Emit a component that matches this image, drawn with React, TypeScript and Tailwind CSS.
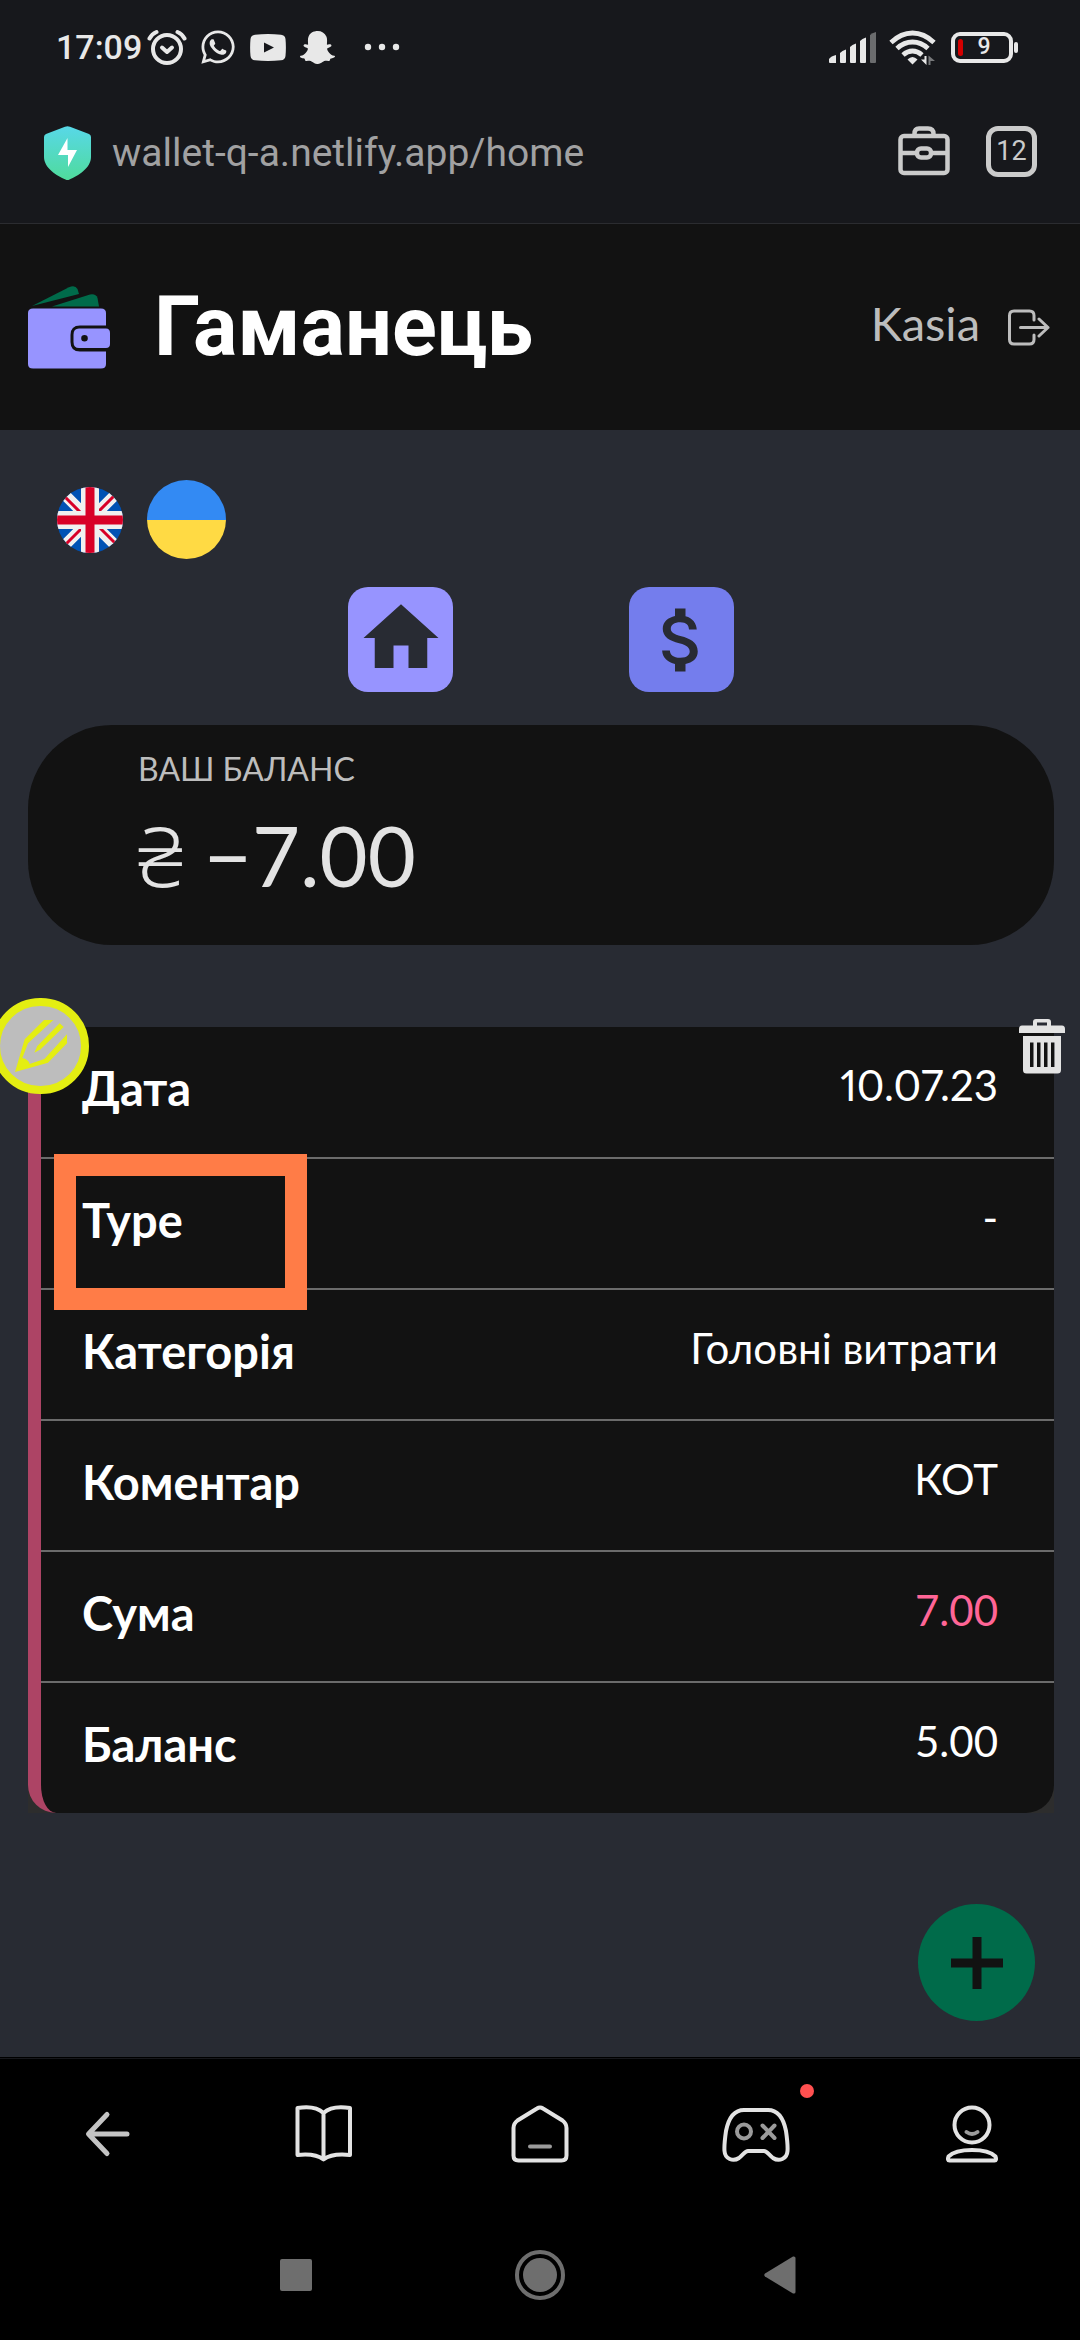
import React from "react";
import { FaWhatsapp, FaSnapchatGhost } from "react-icons/fa";
import { MdHome, MdAttachMoney } from "react-icons/md";

function StatusBar() {
  return (
    <div className="flex h-[94px] items-center justify-between pl-14 pr-[62px] text-[#e8e8e8]">
      <div className="flex items-center">
        <span className="w-[91px] text-[34px] leading-10 font-medium">17:09</span>
        <svg className="h-9 w-10" viewBox="0 0 40 36" fill="none" stroke="currentColor" strokeWidth="4" strokeLinecap="round">
          <circle cx="20" cy="20" r="14" />
          <path d="M2.500 9.500C4 6.500 6.500 4.300 9.500 3M37.500 9.500C36 6.500 33.500 4.300 30.500 3" />
          <path d="M15 18.500l5 4.500 5-4.500" strokeLinejoin="round" />
        </svg>
        <FaWhatsapp className="ml-3 h-[38px] w-[38px]" />
        <svg className="ml-[13px] h-[27px] w-9" viewBox="0 0 36 27">
          <path fill="currentColor" fillRule="evenodd" d="M5 .7Q18-.5 31 .7Q35 1 35.500 5Q36.300 13.500 35.500 22Q35 26 31 26.300Q18 27.500 5 26.300Q1 26 .5 22Q-.3 13.500 .5 5Q1 1 5 .7ZM14 8.500V18.500L24 13.500Z" />
        </svg>
        <FaSnapchatGhost className="ml-[14px] h-[35px] w-[35px]" />
        <svg className="ml-[29px] h-2 w-9" viewBox="0 0 36 8" fill="currentColor">
          <circle cx="4" cy="4" r="3.200" />
          <circle cx="18" cy="4" r="3.200" />
          <circle cx="32" cy="4" r="3.200" />
        </svg>
      </div>
      <div className="flex items-center">
        <svg className="h-[31px] w-12" viewBox="0 0 48 31" fill="currentColor">
          <path d="M0 27Q2 24 7 23V31H1Q0 31 0 30Z" />
          <path d="M11 21Q13 18.500 17 17.500V30Q17 31 16 31H12Q11 31 11 30Z" />
          <path d="M21 15Q23 12.500 27 11.500V30Q27 31 26 31H22Q21 31 21 30Z" />
          <path d="M31 9Q33 6.500 37 5.500V30Q37 31 36 31H32Q31 31 31 30Z" />
          <path fill="#6b6c6e" d="M41 3Q43 1 47 0V30Q47 31 46 31H42Q41 31 41 30Z" />
        </svg>
        <svg className="ml-3 h-[35px] w-12" viewBox="0 0 48 35" fill="none" stroke="currentColor" strokeWidth="4.800">
          <path d="M2 12.500Q12 3 23.500 3T45 12.500" />
          <path d="M8 18.500Q15 12 23.500 12T39 18.500" />
          <path d="M14 25Q18.500 21 23.500 21T33 25" />
          <path fill="currentColor" stroke="none" d="M18.500 29.500Q23.500 24.500 28.500 29.500L23.500 34.500Z" />
          <path fill="currentColor" stroke="none" d="M35.500 26h2v9L32 29.500h3.500z" />
          <path fill="#77787a" stroke="none" d="M39.500 35h2v-4H46L39.500 25.500z" />
        </svg>
        <div className="ml-[14px] flex h-[31px] w-[62px] items-center rounded-[9px] border-4 border-current pl-[3px]">
          <span className="h-[17px] w-[5px] rounded-sm bg-[#d40000]" />
          <span className="flex-1 pr-1 text-center text-[23px] leading-6 font-medium">9</span>
        </div>
        <span className="ml-px h-[11px] w-1 rounded-sm bg-current" />
      </div>
    </div>
  );
}

function AddressBar() {
  return (
    <div className="flex h-[129px] items-start pl-11 pr-[43px] pt-8 text-[#cbcbcb]">
      <svg className="h-[54px] w-[47px] shrink-0" viewBox="0 0 47 54">
        <defs>
          <linearGradient id="shield" x1="0" y1="0" x2="0" y2="1">
            <stop offset="0" stopColor="#58d8e8" />
            <stop offset="1" stopColor="#4fdb9c" />
          </linearGradient>
        </defs>
        <path fill="url(#shield)" d="M21 .8Q23.500-.4 26 .8L45 8Q47 9 47 11V31C47 42 34 50 25.500 53.500Q23.500 54.500 21.500 53.500C13 50 0 42 0 31V11Q0 9 2 8Z" />
        <path fill="#fff" d="M23.500 12V24H33L24 41V29H14Z" />
      </svg>
      <input
        aria-label="Address"
        className="ml-[21px] min-w-0 flex-1 bg-transparent text-[39px] leading-[54px] text-[#a1a1a2] outline-none"
        defaultValue="wallet-q-a.netlify.app/home"
      />
      <button type="button" aria-label="Toolbox" className="h-[51px] w-[52px] shrink-0">
        <svg viewBox="0 0 52 51" fill="none" stroke="currentColor" strokeWidth="4.500">
          <rect x="2.500" y="10" width="47" height="37" rx="3.500" />
          <path d="M16.500 10V8Q16.500 2.500 21 2.500H30Q35.500 2.500 35.500 8V10M2.500 27H18M34 27H49.500" />
          <rect x="19" y="22.500" width="14" height="9" rx="4" />
        </svg>
      </button>
      <button type="button" aria-label="Tabs" className="ml-9 flex h-[51px] w-[51px] shrink-0 items-center justify-center rounded-xl border-[5px] border-current text-[27px] leading-none">
        12
      </button>
    </div>
  );
}

function WalletLogo() {
  return (
    <svg className="h-[83px] w-[82px] shrink-0" viewBox="0 0 82 83">
      <path fill="#006b4a" d="M4 20L41 1.200Q47-1.500 49.500 3L51 8Z" />
      <path fill="#006b4a" d="M24 20.500L62 8.500Q68 7.500 69.500 12L71 20.500Z" />
      <path fill="#9794ff" d="M5 22.500H73Q78 22.500 78 27V39.500H52Q42.500 39.500 42.500 49V56Q42.500 65.500 52 65.500H78V78Q78 82.500 73 82.500H5Q0 82.500 0 78V27Q0 22.500 5 22.500Z" />
      <path fill="#9794ff" fillRule="evenodd" d="M51 42.500H78Q82 42.500 82 47V58Q82 62 78 62H51Q45.500 62 45.500 56V48.500Q45.500 42.500 51 42.500ZM56.500 49A3.300 3.300 0 1 0 56.500 55.600A3.300 3.300 0 1 0 56.500 49Z" />
    </svg>
  );
}

function SiteHeader() {
  return (
    <header className="flex h-[206px] items-center justify-between bg-[#121212] pl-7 pr-[30px]">
      <a href="#home" className="flex items-center gap-11">
        <WalletLogo />
        <h1 className="text-[83px] leading-[96px] font-bold text-white">Гаманець</h1>
      </a>
      <div className="flex items-center gap-7 text-[#bdbdbd]">
        <span className="pb-2 font-['Lato'] text-[47px] leading-[60px]">Kasia</span>
        <button type="button" aria-label="Вийти" className="h-[37px] w-[42px]">
          <svg viewBox="0 0 42 37" fill="none" stroke="currentColor" strokeWidth="3" strokeLinecap="round" strokeLinejoin="round">
            <path d="M26 11V6.500Q26 2 21.500 2H6Q1.500 2 1.500 6.500V30.500Q1.500 35 6 35H21.500Q26 35 26 30.500V26" />
            <path d="M12.500 18.500H40M31 10l9 8.500-9 8.500" />
          </svg>
        </button>
      </div>
    </header>
  );
}

function Languages() {
  return (
    <div className="flex items-center gap-6 pl-[29px]">
      <button type="button" aria-label="English">
        <svg className="h-[66px] w-[66px]" viewBox="0 0 66 66">
          <clipPath id="uk"><circle cx="33" cy="33" r="33" /></clipPath>
          <g clipPath="url(#uk)">
            <path fill="#0052b4" d="M0 0H66V66H0Z" />
            <path stroke="#f0f0f0" strokeWidth="11" d="M0 0L66 66M66 0L0 66" />
            <path stroke="#d80027" strokeWidth="3" d="M5 7L26 28M61 5L40 26M40 38L61 59M5 61L26 40" />
            <path stroke="#f0f0f0" strokeWidth="18" d="M33 0V66M0 33H66" />
            <path stroke="#d80027" strokeWidth="9" d="M33 0V66M0 33H66" />
          </g>
        </svg>
      </button>
      <button type="button" aria-label="Українська" className="flex h-[79px] w-[79px] flex-col overflow-hidden rounded-full">
        <span className="w-full flex-1 bg-[#338af3]" />
        <span className="w-full flex-1 bg-[#ffda44]" />
      </button>
    </div>
  );
}

const rows = [
  { label: "Дата", value: "10.07.23", style: "text-white proportional-nums" },
  { label: "Type", value: "-", style: "text-white" },
  { label: "Категорія", value: "Головні витрати", style: "text-white" },
  { label: "Коментар", value: "КОТ", style: "text-white" },
  { label: "Сума", value: "7.00", style: "text-[#ff6596]" },
  { label: "Баланс", value: "5.00", style: "text-white" },
];

function Transaction() {
  return (
    <section className="relative mt-[82px] bg-[#2d2d2d]">
      <div className="overflow-hidden rounded-b-[28px] border-l-[13px] border-[#ad4465] bg-[#121212]">
        <table className="w-full border-collapse">
          <tbody>
            {rows.map((row) => (
              <tr key={row.label} className="h-[131px] border-b-2 border-[#6b6b6b] align-top last:border-b-0">
                <th scope="row" className="pl-[41px] pt-[31px] text-left text-[47px] leading-[60px] font-bold text-white">
                  {row.label}
                </th>
                <td className={`pr-14 pt-[33px] text-right text-[42px] leading-[50px] ${row.style}`}>
                  {row.value}
                </td>
              </tr>
            ))}
          </tbody>
        </table>
      </div>
      <div className="absolute top-[127px] left-[26px] h-[156px] w-[253px] border-[22px] border-[#ff7c47]" />
      <button type="button" aria-label="Редагувати" className="absolute -top-[29px] -left-9 h-24 w-[97px] rounded-full border-8 border-[#e4ee12] bg-[#bdbdbd]">
        <svg className="mx-auto h-[52px] w-[52px]" viewBox="48 120 156 156" fill="#e4ee12">
          <path d="M48 276L77 178L135 120H163L87 190L70 234Q88 238 92 252L136 237L204 163V190L147 248Z" />
          <path d="M106 218L115 198L182 130L194 141L125 208Z" />
        </svg>
      </button>
      <button type="button" aria-label="Видалити" className="absolute -top-2 -right-[11px] h-[55px] w-[46px] text-[#e3e3e3]">
        <svg viewBox="0 0 46 55" fill="currentColor">
          <path fillRule="evenodd" d="M14 6.500V3Q14 0 17 0H29Q32 0 32 3V6.500H43Q46 6.500 46 10V14H0V10Q0 6.500 3 6.500ZM18 3.500V6.500H28V3.500Z" />
          <path fillRule="evenodd" d="M4 17H42V51Q42 54.500 38.500 54.500H7.500Q4 54.500 4 51ZM11 23.500V48H14.500V23.500ZM18 23.500V48H21.500V23.500ZM25 23.500V48H28.500V23.500ZM32 23.500V48H35.500V23.500Z" />
        </svg>
      </button>
    </section>
  );
}

function Navigation() {
  return (
    <nav className="flex h-[151px] items-center border-t border-[#17181c] bg-black text-[#e3e3e3]">
      <button type="button" aria-label="Back" className="flex flex-1 justify-center text-[#c4c4c4]">
        <svg className="h-[58px] w-[58px]" viewBox="0 0 58 58" fill="none" stroke="currentColor" strokeWidth="5" strokeLinecap="round" strokeLinejoin="round">
          <path d="M48 29H10M28 9.500L9.500 29L28 48.500" />
        </svg>
      </button>
      <button type="button" aria-label="Bookmarks" className="flex flex-1 justify-center">
        <svg className="h-[58px] w-[58px]" viewBox="0 0 58 58" fill="none" stroke="currentColor" strokeWidth="4" strokeLinejoin="round">
          <path d="M28.500 8Q20 0 2.500 3V50Q20 48 28.500 54.500Q37 48 55 50V3Q37 0 28.500 8V54" />
        </svg>
      </button>
      <button type="button" aria-label="Home" className="flex flex-1 justify-center">
        <svg className="h-[58px] w-[58px]" viewBox="0 0 58 58" fill="none" stroke="currentColor" strokeWidth="4" strokeLinecap="round">
          <path d="M26 3.500Q29 1.500 32 3.500L51.500 15.500Q55.500 18.500 55.500 23V50.500Q55.500 55.500 50.500 55.500H7.500Q2.500 55.500 2.500 50.500V23Q2.500 18.500 6.500 15.500Z" />
          <path stroke="#9b9b9b" d="M19 41.500H39" />
        </svg>
      </button>
      <button type="button" aria-label="Games" className="flex flex-1 justify-center">
        <span className="relative">
          <svg className="h-[58px] w-[68px]" viewBox="0 0 68 58" fill="none" stroke="currentColor" strokeWidth="4" strokeLinecap="round">
            <path d="M22 5H46C58 5 62 16 64 26C65 33 66 40 65.500 46C65 54 57 57 51 53C47 50 45 46 42 46H26C23 46 21 50 17 53C11 57 3 54 2.500 46C2 40 3 33 4 26C6 16 10 5 22 5Z" />
            <circle cx="22" cy="26.500" r="7" stroke="#9b9b9b" />
            <path stroke="#9b9b9b" d="M40.500 20.500L52.500 33M52.500 20.500L40.500 33" />
          </svg>
          <span className="absolute -top-[21px] -right-6 h-[14px] w-[14px] rounded-full bg-[#ff5050]" />
        </span>
      </button>
      <button type="button" aria-label="Profile" className="flex flex-1 justify-center">
        <svg className="h-[58px] w-[58px]" viewBox="0 0 58 58" fill="none" stroke="currentColor" strokeWidth="4" strokeLinecap="round">
          <circle cx="29" cy="20" r="17.500" />
          <path stroke="#9b9b9b" d="M23.500 27Q29 31 34.500 27" />
          <path d="M6.500 55.500Q4 55.500 5.500 51.500Q12 45 29 45T52.500 51.500Q54 55.500 51.500 55.500Z" />
        </svg>
      </button>
    </nav>
  );
}

function SystemKeys() {
  return (
    <div className="flex h-[131px] items-center justify-between bg-black px-[271px] text-[#6e6e6e]">
      <button type="button" aria-label="Recent apps" className="flex w-[50px] justify-center">
        <span className="h-8 w-8 rounded-[2px] bg-current" />
      </button>
      <button type="button" aria-label="System home" className="flex h-[50px] w-[50px] items-center justify-center rounded-full border-4 border-current">
        <span className="h-[34px] w-[34px] rounded-full bg-current" />
      </button>
      <button type="button" aria-label="System back" className="flex w-[50px] justify-center pr-2">
        <svg className="h-[38px] w-8" viewBox="0 0 32 38" fill="currentColor">
          <path d="M1 17.500L29 .5Q31.500 0 31.500 2V36Q31.500 38 29 37.500L1 20.500Q-.5 19 1 17.500Z" />
        </svg>
      </button>
    </div>
  );
}

export default function App() {
  return (
    <div className="flex min-h-screen flex-col bg-[#282b33] font-['Roboto',sans-serif]">
      <div className="border-b border-[#2b2c30] bg-[#17181c]">
        <StatusBar />
        <AddressBar />
      </div>
      <SiteHeader />
      <main className="flex flex-1 flex-col pr-[26px] pl-7 pt-[50px] font-['Lato','Open_Sans',sans-serif]">
        <Languages />
        <div className="mt-7 flex justify-center gap-44 text-[#282b33]">
          <a href="#home" aria-label="Головна" className="flex h-[105px] w-[105px] items-center justify-center rounded-[20px] bg-[#9794ff]">
            <MdHome className="mb-1 h-[90px] w-[90px]" />
          </a>
          <a href="#currency" aria-label="Курс валют" className="flex h-[105px] w-[105px] items-center justify-center rounded-[20px] bg-[#747ded]">
            <MdAttachMoney className="h-[84px] w-[84px]" />
          </a>
        </div>
        <section className="mt-[33px] h-[220px] rounded-[84px] bg-[#121212] pt-6 pl-[110px]">
          <h2 className="text-[32px] leading-10 text-[#bdbdbd]">ВАШ БАЛАНС</h2>
          <p className="mt-5 text-[83px] leading-[92px] text-[#e3e3e3]">
            <span className="font-['Noto_Sans','Liberation_Sans',sans-serif] font-light">₴</span> −7.00
          </p>
        </section>
        <Transaction />
        <button type="button" aria-label="Додати" className="mt-auto mr-[19px] mb-9 flex h-[117px] w-[117px] items-center justify-center self-end rounded-full bg-[#006b4a]">
          <svg className="h-[52px] w-[52px]" viewBox="0 0 52 52" stroke="#121212" strokeWidth="9">
            <path d="M26 0V52M0 26H52" />
          </svg>
        </button>
      </main>
      <div className="h-px bg-black" />
      <Navigation />
      <SystemKeys />
    </div>
  );
}
